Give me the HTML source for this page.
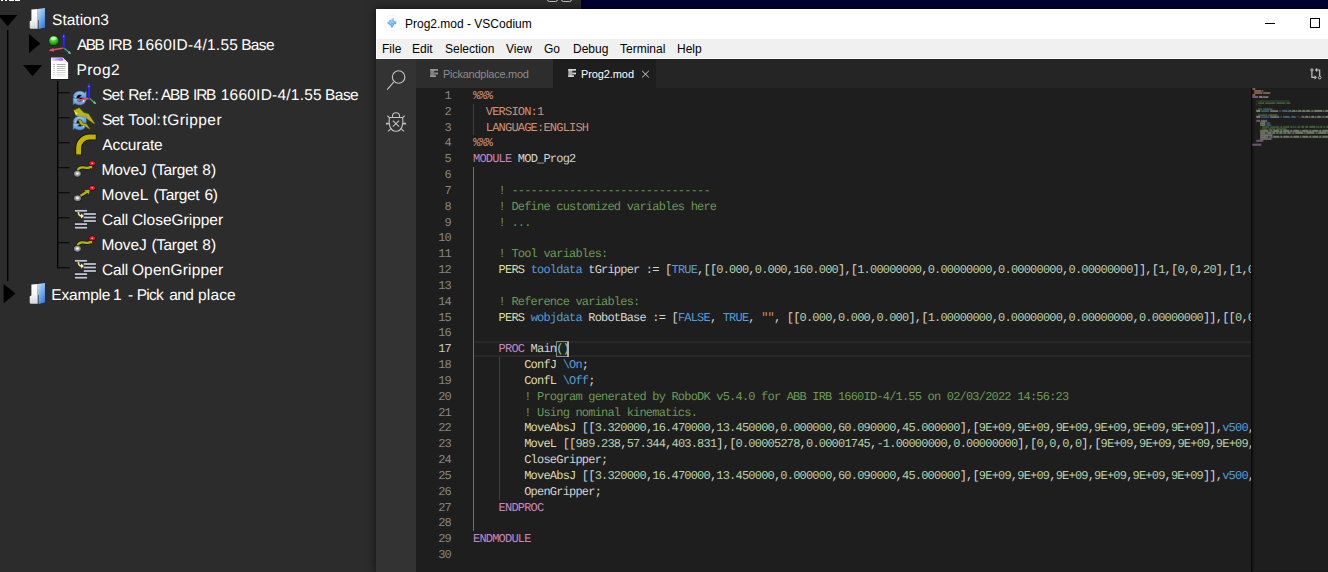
<!DOCTYPE html>
<html>
<head>
<meta charset="utf-8">
<title>Prog2.mod - VSCodium</title>
<style>
*{box-sizing:border-box;margin:0;padding:0}
html,body{width:1328px;height:572px;overflow:hidden;background:#2c2c2c;font-family:"Liberation Sans",sans-serif;}
#root{position:relative;width:1328px;height:572px;overflow:hidden;background:#2c2c2c;}
.abs{position:absolute}
/* ---------- left tree ---------- */
#tree{position:absolute;left:0;top:0;width:376px;height:572px;background:#2c2c2c;overflow:hidden}
.tt{position:absolute;height:25px;line-height:25px;color:#ffffff;font-size:15.5px;white-space:nowrap;text-rendering:geometricPrecision}
.tl{position:absolute;background:#000}
.ic{position:absolute;overflow:visible}
/* ---------- vscodium window ---------- */
#win{position:absolute;left:376px;top:9px;width:952px;height:563px;background:#1e1e1e;overflow:hidden;box-shadow:0 0 8px 1px rgba(0,0,0,0.5)}
#titlebar{position:absolute;left:0;top:0;width:952px;height:30px;background:#ffffff}
#titletext{position:absolute;left:29px;top:1px;height:30px;line-height:29px;font-size:12px;color:#000;white-space:nowrap}
#menubar{position:absolute;left:0;top:30px;width:952px;height:20px;background:#f0f0f0;border-left:1px solid #fff;border-bottom:1px solid #fff}
.mi{position:absolute;top:1px;margin-left:-1px;height:20px;line-height:19px;font-size:12px;color:#000;white-space:nowrap}
#activity{position:absolute;left:0;top:50px;width:40px;height:513px;background:#333333}
#tabbar{position:absolute;left:40px;top:50px;width:912px;height:29px;background:#252526}
.tab{position:absolute;top:0;height:29px;line-height:29px;font-size:11px;white-space:nowrap}
#editor{position:absolute;left:40px;top:79px;width:835px;height:484px;background:#1e1e1e;overflow:hidden}
#minimap{position:absolute;left:875px;top:79px;width:77px;height:484px;background:#1e1e1e;overflow:hidden;box-shadow:inset 3px 0 3px -2px #000}
.ln{position:absolute;left:0;width:35px;text-align:right;color:#858585;font-family:"Liberation Mono",monospace;font-size:12.0px;letter-spacing:-0.7992px;height:16px;line-height:16px;white-space:pre;text-rendering:geometricPrecision}
.cl{position:absolute;left:57px;color:#d4d4d4;font-family:"Liberation Mono",monospace;font-size:12.0px;letter-spacing:-0.7992px;height:16px;line-height:16px;white-space:pre;text-rendering:geometricPrecision}
.o{color:#ce9178}.p{color:#c586c0}.g{color:#6a9955}.y{color:#dcdcaa}.b{color:#569cd6}.n{color:#b5cea8}.w{color:#d4d4d4}
.guide{position:absolute;width:1px;background:#404040}
</style>
</head>
<body>
<div id="root">
<div class="abs" style="left:581px;top:0;width:747px;height:9px;background:#000030"></div>
<div class="abs" style="left:547px;top:-7px;width:11px;height:9px;border:1.2px solid #c4c0bc;border-radius:2.5px"></div>
<div class="abs" style="left:561px;top:-7px;width:11px;height:9px;border:1.2px solid #c4c0bc;border-radius:2.5px"></div>
<div id="tree">
<svg class="abs" style="left:0;top:0" width="376" height="572" viewBox="0 0 376 572">
<defs>
  <linearGradient id="gw" x1="0" y1="0" x2="0" y2="1"><stop offset="0" stop-color="#ffffff"/><stop offset="0.55" stop-color="#f4f4f4"/><stop offset="1" stop-color="#d6d6d6"/></linearGradient>
  <linearGradient id="gb" x1="0.2" y1="0" x2="0.8" y2="1"><stop offset="0" stop-color="#b9d9f2"/><stop offset="0.45" stop-color="#7fb2ea"/><stop offset="1" stop-color="#2f78de"/></linearGradient>
  <radialGradient id="gsph" cx="0.45" cy="0.3" r="0.75"><stop offset="0" stop-color="#c8f8c0"/><stop offset="0.32" stop-color="#4ad636"/><stop offset="0.72" stop-color="#15a00d"/><stop offset="1" stop-color="#063804"/></radialGradient>
  <linearGradient id="gpur" x1="0" y1="0" x2="1" y2="0"><stop offset="0" stop-color="#ead8ff"/><stop offset="1" stop-color="#8a55ff"/></linearGradient>
  <radialGradient id="ggray" cx="0.5" cy="0.45" r="0.6"><stop offset="0" stop-color="#ffffff"/><stop offset="0.22" stop-color="#e6e6e6"/><stop offset="0.5" stop-color="#9c9c9c"/><stop offset="0.85" stop-color="#6a6a6a"/><stop offset="1" stop-color="#2a2a2a"/></radialGradient>
  <radialGradient id="gred" cx="0.5" cy="0.45" r="0.6"><stop offset="0" stop-color="#ffffff"/><stop offset="0.3" stop-color="#e83040"/><stop offset="0.8" stop-color="#c40818"/><stop offset="1" stop-color="#7a0008"/></radialGradient>
  <linearGradient id="gref" x1="0" y1="0" x2="0" y2="1"><stop offset="0" stop-color="#9dc6ea"/><stop offset="1" stop-color="#5a94d2"/></linearGradient>

  <!-- station icon : origin = (29.7, cy-11) -->
  <g id="station">
    <path d="M1.7,1.5 L8,1 L8,20.8 L1.4,20.8 Q0,20.8 0,19.6 L0,13.7 Q0,12.7 1.7,12.4 Z" fill="url(#gw)"/>
    <path d="M8,1 L15.3,0 L15.3,19.4 L8.9,21.1 L8.9,12.3 L8,11.8 Z" fill="url(#gb)"/>
  </g>
  <!-- refresh arrows : origin = (72.9, cy-3) ; size 13.4 x 14 -->
  <g id="refresh">
    <ellipse cx="6.8" cy="7.1" rx="3.6" ry="3.2" fill="#0c0c0c"/>
    <path d="M0.4,6.6 C0.4,2.4 3.4,0.3 6.9,0.3 C8.9,0.3 10.4,0.9 11.6,1.9 L13.3,0.4 L13.3,7.2 L6.6,6.4 L8.9,4.3 C8.2,3.9 7.6,3.7 6.8,3.7 C5,3.7 3.8,4.9 3.6,6.6 Z" fill="url(#gref)" stroke="#3b74b4" stroke-width="0.5"/>
    <path d="M13.1,7.9 C13.1,11.8 10.2,13.9 6.7,13.9 C4.7,13.9 3.2,13.3 2,12.3 L0.3,13.8 L0.3,7 L7,7.8 L4.7,9.9 C5.4,10.3 6,10.5 6.8,10.5 C8.6,10.5 9.8,9.4 10,7.9 Z" fill="url(#gref)" stroke="#3b74b4" stroke-width="0.5"/>
    <rect x="1.6" y="5.6" width="1.8" height="0.9" fill="#ffffff"/>
    <rect x="10.2" y="9.2" width="0.9" height="1.8" fill="#e8f2ff"/>
  </g>
  <!-- axes: origin at axis origin point -->
  <g id="axes">
    <path d="M0,0 L6.3,5.3" stroke="#3fae7c" stroke-width="1.2" fill="none"/>
    <path d="M7.4,6.2 L3.9,4.9 L5.6,3 Z" fill="#5fd6a2"/>
    <path d="M0,0 L-13.5,2.2" stroke="#f04a5e" stroke-width="1.4" fill="none"/>
    <path d="M-15.2,2.4 L-10.4,-0.1 L-9.9,3.7 Z" fill="#f04a5e"/>
    <path d="M0,0.4 L0,-12" stroke="#2a22ff" stroke-width="2" fill="none"/>
    <path d="M0,-15.2 L1.9,-10.6 L-1.9,-10.6 Z" fill="#2a22ff"/>
    <rect x="-0.5" y="-12.4" width="0.9" height="1.6" fill="#9a9aff"/>
  </g>
  <g id="axes2">
    <path d="M0,0 L6.3,5.3" stroke="#3fae7c" stroke-width="1.2" fill="none"/>
    <path d="M7.4,6.2 L3.9,4.9 L5.6,3 Z" fill="#5fd6a2"/>
    <path d="M0,0.3 L-11.2,2.4" stroke="#f04a5e" stroke-width="1.7" fill="none" stroke-linecap="round"/>
    <rect x="-5.9" y="1.9" width="0.9" height="1.7" fill="#f6e6e6"/>
    <path d="M0,0.4 L0,-12" stroke="#2a22ff" stroke-width="2" fill="none"/>
    <path d="M0,-15.2 L1.9,-10.6 L-1.9,-10.6 Z" fill="#2a22ff"/>
    <rect x="-0.5" y="-12.4" width="0.9" height="1.6" fill="#9a9aff"/>
  </g>
  <!-- move J : origin row center (0,cy) -->
  <g id="movej">
    <path d="M77.6,2 C78.6,-2.8 83.5,-1.6 85.3,-1.3 C87.5,-0.9 89,-0.6 90.8,-2.4" stroke="#1a1a10" stroke-width="3.6" fill="none" stroke-linecap="round"/>
    <path d="M92.6,-4.2 L92.6,0.9 L88.6,-2.9 Z" fill="#b6b412" stroke="#1a1a10" stroke-width="0.8"/>
    <path d="M77.6,2 C78.6,-2.8 83.5,-1.6 85.3,-1.3 C87.5,-0.9 89,-0.6 90.8,-2.4" stroke="#b6b412" stroke-width="2.2" fill="none" stroke-linecap="round"/>
    <ellipse cx="77.4" cy="4.8" rx="4.1" ry="3.6" fill="#1c1c1c"/>
    <ellipse cx="77.4" cy="4.8" rx="3.6" ry="3.1" fill="url(#ggray)"/>
    <ellipse cx="92.2" cy="-5.6" rx="3.5" ry="2.7" fill="#240004"/>
    <ellipse cx="92.2" cy="-5.6" rx="3.1" ry="2.3" fill="url(#gred)"/>
  </g>
  <g id="movel">
    <path d="M80.2,1.9 L87,-2.3" stroke="#1a1a10" stroke-width="3.6" fill="none"/>
    <path d="M90.4,-5 L89.2,0.9 L83.4,-3.9 Z" fill="#b6b412" stroke="#1a1a10" stroke-width="0.8"/>
    <path d="M80.2,1.9 L87,-2.3" stroke="#b6b412" stroke-width="2.3" fill="none"/>
    <ellipse cx="77.5" cy="4.3" rx="4.1" ry="3.6" fill="#1c1c1c"/>
    <ellipse cx="77.5" cy="4.3" rx="3.6" ry="3.1" fill="url(#ggray)"/>
    <ellipse cx="92.2" cy="-5.9" rx="3.5" ry="2.7" fill="#240004"/>
    <ellipse cx="92.2" cy="-5.9" rx="3.1" ry="2.3" fill="url(#gred)"/>
  </g>
  <g id="call">
    <g fill="#1e1e22">
      <rect x="74.5" y="-10.4" width="13" height="2.7"/><rect x="83.3" y="-7.2" width="13" height="2.7"/><rect x="83.3" y="-3.7" width="13" height="2.7"/><rect x="83.3" y="-0.2" width="13" height="2.7"/><rect x="74.5" y="2.9" width="13" height="2.7"/><rect x="74.5" y="6.5" width="13" height="2.7"/>
    </g>
    <g fill="#bfc4d6">
      <rect x="74.9" y="-10" width="12.2" height="1.8"/><rect x="83.7" y="-6.8" width="12.2" height="1.8"/><rect x="83.7" y="-3.3" width="12.2" height="1.8"/><rect x="83.7" y="0.2" width="12.2" height="1.8"/><rect x="74.9" y="3.3" width="12.2" height="1.8"/><rect x="74.9" y="6.9" width="12.2" height="1.8"/>
    </g>
    <path d="M78.4,-8 C78.4,-5 79.6,-4 81.6,-3.9" stroke="#f4e08a" stroke-width="1.6" fill="none"/>
    <path d="M81,-6.3 L84,-3.8 L81,-1.5 Z" fill="#fff3c0"/>
  </g>
</defs>

<!-- tree lines -->
<rect x="7" y="30" width="1.4" height="251" fill="#000"/>
<rect x="57" y="81" width="1.3" height="187.3" fill="#000"/>
<g fill="#0a0a0a">
<rect x="57" y="92.1" width="12.7" height="1.2"/><rect x="57" y="117.1" width="12.7" height="1.2"/><rect x="57" y="142.1" width="12.7" height="1.2"/><rect x="57" y="167.1" width="12.7" height="1.2"/><rect x="57" y="192.1" width="12.7" height="1.2"/><rect x="57" y="217.1" width="12.7" height="1.2"/><rect x="57" y="242.1" width="12.7" height="1.2"/><rect x="57" y="267.1" width="12.7" height="1.2"/>
</g>
<!-- arrows -->
<path d="M-2,15 L17.2,15 L7.6,26.2 Z" fill="#000"/>
<path d="M29,34 L40.2,43.6 L29,53.2 Z" fill="#000"/>
<path d="M23,65 L42.2,65 L32.6,76.2 Z" fill="#000"/>
<path d="M3.6,284 L15.6,293.6 L3.6,303.2 Z" fill="#000"/>

<!-- station icons -->
<use href="#station" x="29.7" y="8"/>
<use href="#station" x="29.7" y="283"/>

<!-- ABB base icon -->
<circle cx="53.8" cy="40.8" r="5.3" fill="#0a2a08"/>
<circle cx="53.8" cy="40.8" r="4.8" fill="url(#gsph)"/>
<ellipse cx="53.6" cy="38.4" rx="3.1" ry="1.7" fill="#ffffff" opacity="0.55"/>
<use href="#axes" x="63.8" y="48"/>

<!-- doc icon -->
<path d="M50.3,57 L63,57 L68.8,62.6 L68.8,79.5 L50.3,79.5 Z" fill="#0c0c0c"/>
<path d="M50.9,57.5 L62.8,57.5 L68.2,62.8 L68.2,78.9 L50.9,78.9 Z" fill="#ffffff"/>
<path d="M62.8,57.5 L68.2,62.8 L63.6,62.4 Z" fill="#e4e4e4"/>
<rect x="51.3" y="58.2" width="11.6" height="2.5" fill="url(#gpur)"/>
<g>
<rect x="53.3" y="64" width="1.7" height="0.9" fill="#a0a0a0"/><rect x="56.7" y="64" width="8.8" height="0.9" fill="#a0a0a0"/>
<rect x="53.3" y="66" width="1.7" height="0.9" fill="#aaaaaa"/><rect x="56.7" y="66" width="8.8" height="0.9" fill="#aaaaaa"/>
<rect x="53.3" y="68" width="1.7" height="0.9" fill="#b6b6b6"/><rect x="56.7" y="68" width="8.8" height="0.9" fill="#b6b6b6"/>
<rect x="53.3" y="70" width="1.7" height="0.9" fill="#c2c2c2"/><rect x="56.7" y="70" width="8.8" height="0.9" fill="#c2c2c2"/>
<rect x="53.3" y="72" width="1.7" height="0.9" fill="#d0d0d0"/><rect x="56.7" y="72" width="8.8" height="0.9" fill="#d0d0d0"/>
<rect x="53.3" y="73.9" width="1.7" height="0.9" fill="#dadada"/><rect x="56.7" y="73.9" width="8.8" height="0.9" fill="#dadada"/>
<rect x="53.3" y="75.6" width="1.7" height="0.9" fill="#e2e2e2"/><rect x="56.7" y="75.6" width="8.8" height="0.9" fill="#e2e2e2"/>
</g>

<!-- Set Ref icon -->
<use href="#refresh" x="72.9" y="91"/>
<use href="#axes2" x="89" y="98"/>

<!-- Set Tool icon -->
<path d="M73.4,110.2 L79.2,107.6 L84,112.6 L88.6,113.4 L95,123.6 L94.2,124.2 L86.4,118.6 L80.6,117.8 L75.6,115.6 Z" fill="#b4b41e" stroke="#3a3a08" stroke-width="0.6"/>
<path d="M74,110.6 L76,115 L77.8,113.6 Z" fill="#e8e870"/>
<use href="#refresh" x="72.9" y="116"/>
<path d="M77.8,119.6 L81.2,120 L82.6,123 L86.6,123.8 L90,128.8 L89.2,129.2 L84.6,126 L80.6,125 Z" fill="#b4b41e" stroke="#3a3a08" stroke-width="0.5"/>

<!-- Accurate icon -->
<path d="M78.65,155 L78.65,148 A11,11 0 0 1 89.65,137.05 L96.2,137.05" stroke="#0a0a0a" stroke-width="6.6" fill="none"/>
<path d="M78.65,154.6 L78.65,148 A11,11 0 0 1 89.65,137.05 L95.8,137.05" stroke="#c0b400" stroke-width="5" fill="none"/>

<use href="#movej" x="0" y="169"/>
<use href="#movel" x="0" y="194"/>
<use href="#call" x="0" y="219.9"/>
<use href="#movej" x="0" y="244"/>
<use href="#call" x="0" y="269.9"/>
</svg>
<div class="tt" style="left:52.10px;top:7.5px;letter-spacing:-0.008px">Station3</div>
<div class="tt" style="left:77.10px;top:32.5px;letter-spacing:-1.638px">ABB</div>
<div class="tt" style="left:108.00px;top:32.5px;letter-spacing:-0.800px">IRB</div>
<div class="tt" style="left:136.50px;top:32.5px;letter-spacing:0.265px">1660ID-4/1.55</div>
<div class="tt" style="left:241.20px;top:32.5px;letter-spacing:-0.670px">Base</div>
<div class="tt" style="left:76.40px;top:57.5px;letter-spacing:0.465px">Prog2</div>
<div class="tt" style="left:102.00px;top:82.5px;letter-spacing:-0.779px">Set</div>
<div class="tt" style="left:128.20px;top:82.5px;letter-spacing:-0.557px">Ref.:</div>
<div class="tt" style="left:160.90px;top:82.5px;letter-spacing:-1.138px">ABB</div>
<div class="tt" style="left:193.10px;top:82.5px;letter-spacing:-1.250px">IRB</div>
<div class="tt" style="left:220.70px;top:82.5px;letter-spacing:0.232px">1660ID-4/1.55</div>
<div class="tt" style="left:325.00px;top:82.5px;letter-spacing:-0.536px">Base</div>
<div class="tt" style="left:102.00px;top:107.5px;letter-spacing:-0.779px">Set</div>
<div class="tt" style="left:128.20px;top:107.5px;letter-spacing:-0.034px">Tool:</div>
<div class="tt" style="left:162.40px;top:107.5px;letter-spacing:0.453px">tGripper</div>
<div class="tt" style="left:102.30px;top:132.5px;letter-spacing:-0.107px">Accurate</div>
<div class="tt" style="left:101.40px;top:157.5px;letter-spacing:-0.076px">MoveJ</div>
<div class="tt" style="left:151.40px;top:157.5px;letter-spacing:-0.356px">(Target</div>
<div class="tt" style="left:202.20px;top:157.5px;letter-spacing:0.280px">8)</div>
<div class="tt" style="left:101.40px;top:182.5px;letter-spacing:0.099px">MoveL</div>
<div class="tt" style="left:153.50px;top:182.5px;letter-spacing:-0.356px">(Target</div>
<div class="tt" style="left:204.60px;top:182.5px;letter-spacing:-0.420px">6)</div>
<div class="tt" style="left:102.10px;top:207.5px;letter-spacing:-0.219px">Call</div>
<div class="tt" style="left:131.90px;top:207.5px;letter-spacing:-0.005px">CloseGripper</div>
<div class="tt" style="left:101.40px;top:232.5px;letter-spacing:-0.076px">MoveJ</div>
<div class="tt" style="left:151.40px;top:232.5px;letter-spacing:-0.356px">(Target</div>
<div class="tt" style="left:202.20px;top:232.5px;letter-spacing:0.280px">8)</div>
<div class="tt" style="left:102.10px;top:257.5px;letter-spacing:-0.219px">Call</div>
<div class="tt" style="left:131.90px;top:257.5px;letter-spacing:0.166px">OpenGripper</div>
<div class="tt" style="left:51.30px;top:282.5px;letter-spacing:-0.197px">Example</div>
<div class="tt" style="left:113.00px;top:282.5px;letter-spacing:0.000px">1</div>
<div class="tt" style="left:128.00px;top:282.5px;letter-spacing:0.000px">-</div>
<div class="tt" style="left:136.70px;top:282.5px;letter-spacing:-0.744px">Pick</div>
<div class="tt" style="left:169.30px;top:282.5px;letter-spacing:-0.620px">and</div>
<div class="tt" style="left:198.10px;top:282.5px;letter-spacing:0.141px">place</div>
<div class="abs" style="left:1.4px;top:0;width:1.4px;height:1.1px;background:#fff"></div><div class="abs" style="left:4.8px;top:0;width:1.8px;height:1.1px;background:#fff"></div><div class="abs" style="left:9.4px;top:0;width:4.6px;height:1.2px;background:#fff"></div><div class="abs" style="left:15.4px;top:0;width:4.6px;height:1.2px;background:#fff"></div>
</div>
<div id="win">
  <div id="titlebar">
    <svg class="abs" style="left:6px;top:5px" width="20" height="20" viewBox="0 0 20 20">
      <defs><linearGradient id="gvs" x1="0" y1="0" x2="0.3" y2="1"><stop offset="0" stop-color="#a6d4fb"/><stop offset="1" stop-color="#3f90ec"/></linearGradient>
      <filter id="fbl" x="-20%" y="-20%" width="140%" height="140%"><feGaussianBlur stdDeviation="0.35"/></filter></defs>
      <circle cx="9.9" cy="8.8" r="7.7" fill="none" stroke="#e2e2e2" stroke-width="0.7" stroke-dasharray="1.6 1.2"/>
      <path filter="url(#fbl)" d="M11.2,3.8 L12.2,4.4 L11.6,6.6 L14.6,7.8 L14,10.2 L12.6,10 L10.2,13.8 L9.4,13.4 L8.2,11.2 L5.6,9.8 L5.2,8.2 L6.8,7.6 L7.2,5.8 L9.2,5.8 Z" fill="url(#gvs)" opacity="0.9"/>
      <path d="M9.4,6.8 L10.2,8.6 L11.6,8.4 M8,8 L9,9.8 M10.4,10 L9.8,11.8" stroke="#e8f4ff" stroke-width="0.6" fill="none" opacity="0.8"/>
    </svg>
    <div id="titletext">Prog2.mod - VSCodium</div>
    <div class="abs" style="left:889px;top:14px;width:10px;height:1px;background:#000"></div>
    <div class="abs" style="left:934px;top:9px;width:10px;height:10px;border:1px solid #000"></div>
  </div>
  <div id="menubar">
    <div class="mi" style="left:6px">File</div>
    <div class="mi" style="left:36px">Edit</div>
    <div class="mi" style="left:69px">Selection</div>
    <div class="mi" style="left:130px">View</div>
    <div class="mi" style="left:168px">Go</div>
    <div class="mi" style="left:197px">Debug</div>
    <div class="mi" style="left:244px">Terminal</div>
    <div class="mi" style="left:301px">Help</div>
  </div>
  <div id="activity">
    <svg class="abs" style="left:0;top:0" width="40" height="100" viewBox="0 0 40 100">
      <!-- search -->
      <circle cx="22.6" cy="18" r="6.25" fill="none" stroke="#c2c2c2" stroke-width="1.15"/>
      <path d="M17.9,22.9 L11.2,30.6" stroke="#c2c2c2" stroke-width="1.15" fill="none"/>
      <!-- bug -->
      <g stroke="#c2c2c2" stroke-width="1.1" fill="none" transform="translate(0,0.7)">
        <path d="M16.5,57.7 L16.5,56.5 A3.5,3.5 0 0 1 23.5,56.5 L23.5,57.7"/>
        <path d="M13.4,57.75 L26.6,57.75 C27.6,63.4 26.4,71.6 20,71.6 C13.6,71.6 12.4,63.4 13.4,57.75 Z"/>
        <path d="M16.8,60.9 L23.1,66.9 M23.1,60.9 L16.8,66.9"/>
        <path d="M13.8,58.4 L11.4,55.9 M26.2,58.4 L28.6,55.9 M15.3,68.7 L12,71.6 M24.7,68.7 L28,71.6"/>
        <path d="M9.9,63.9 L12.9,63.9 M27.1,63.9 L30.1,63.9" stroke-width="1.6"/>
      </g>
    </svg>
  </div>
  <div id="tabbar">
    <div class="tab" style="left:0;width:137px;background:#2d2d2d;color:#8c8c8c">
      <svg class="abs" style="left:14px;top:10px" width="9" height="9" viewBox="0 0 9 9"><g opacity="0.62"><rect x="0.3" y="0" width="4" height="8" fill="#b4b4b4"/><rect x="0.3" y="0" width="7.7" height="1.7" fill="#d8d8d8"/><rect x="4.3" y="3.6" width="3.7" height="1.8" fill="#d8d8d8"/><rect x="0.3" y="6.3" width="5.7" height="1.7" fill="#d8d8d8"/></g></svg>
      <span style="position:absolute;left:27px;top:1px;letter-spacing:-0.26px">Pickandplace.mod</span></div>
    <div class="tab" style="left:137px;width:103px;background:#1e1e1e;color:#ffffff">
      <svg class="abs" style="left:14.6px;top:10px" width="9" height="9" viewBox="0 0 9 9"><rect x="0.3" y="0" width="4" height="8" fill="#a8a8a8"/><rect x="0.3" y="0" width="7.7" height="1.7" fill="#d4d4d4"/><rect x="4.3" y="3.6" width="3.7" height="1.8" fill="#d4d4d4"/><rect x="0.3" y="6.3" width="5.7" height="1.7" fill="#d4d4d4"/></svg>
      <span style="position:absolute;left:28px;top:1px;letter-spacing:-0.1px">Prog2.mod</span>
      <svg class="abs" style="left:87.5px;top:10.5px" width="9" height="9" viewBox="0 0 9 9"><path d="M1.2,0.9 L7.8,7.4 M7.8,0.9 L1.2,7.4" stroke="#cfcfcf" stroke-width="1" fill="none"/></svg>
    </div>
    <svg class="abs" style="left:890px;top:6px" width="20" height="18" viewBox="0 0 20 18">
      <g stroke="#c4c4c4" stroke-width="1.2" fill="none">
        <path d="M5.9,5.4 L5.9,12.4 L9.4,12.4"/>
        <path d="M13.7,11 L13.7,5 L10.4,5"/>
        <circle cx="13.7" cy="12.6" r="1.3" stroke-width="1"/>
      </g>
      <circle cx="5.9" cy="4.9" r="1.7" fill="#9a9a9a"/>
      <path d="M8.6,10.2 L10.9,12.4 L8.6,14.6 Z" fill="#c4c4c4"/>
      <path d="M11.2,2.8 L8.9,5 L11.2,7.2 Z" fill="#c4c4c4"/>
    </svg>
  </div>

  <div id="editor">
<div class="abs" style="left:57px;top:253.23px;width:778px;height:15.83px;border-top:2px solid #282828;border-bottom:2px solid #282828"></div>
<div class="guide" style="left:57.0px;top:15.73px;height:31.67px;background:#404040"></div>
<div class="guide" style="left:57.0px;top:79.07px;height:364.16px;background:#707070"></div>
<div class="guide" style="left:82.6px;top:269.06px;height:142.50px;background:#404040"></div>
<div class="ln" style="top:-0.10px;color:#858585">1</div>
<div class="cl" style="top:-0.10px"><span class="o">%%%</span></div>
<div class="ln" style="top:15.73px;color:#858585">2</div>
<div class="cl" style="top:15.73px"><span class="o">  VERSION:1</span></div>
<div class="ln" style="top:31.57px;color:#858585">3</div>
<div class="cl" style="top:31.57px"><span class="o">  LANGUAGE:ENGLISH</span></div>
<div class="ln" style="top:47.40px;color:#858585">4</div>
<div class="cl" style="top:47.40px"><span class="o">%%%</span></div>
<div class="ln" style="top:63.23px;color:#858585">5</div>
<div class="cl" style="top:63.23px"><span class="p">MODULE</span> MOD_Prog2</div>
<div class="ln" style="top:79.07px;color:#858585">6</div>
<div class="ln" style="top:94.90px;color:#858585">7</div>
<div class="cl" style="top:94.90px"><span class="g">    ! -------------------------------</span></div>
<div class="ln" style="top:110.73px;color:#858585">8</div>
<div class="cl" style="top:110.73px"><span class="g">    ! Define customized variables here</span></div>
<div class="ln" style="top:126.56px;color:#858585">9</div>
<div class="cl" style="top:126.56px"><span class="g">    ! ...</span></div>
<div class="ln" style="top:142.40px;color:#858585">10</div>
<div class="ln" style="top:158.23px;color:#858585">11</div>
<div class="cl" style="top:158.23px"><span class="g">    ! Tool variables:</span></div>
<div class="ln" style="top:174.06px;color:#858585">12</div>
<div class="cl" style="top:174.06px">    <span class="y">PERS</span> <span class="b">tooldata</span> tGripper := [<span class="b">TRUE</span>,[[<span class="n">0.000</span>,<span class="n">0.000</span>,<span class="n">160.000</span>],[<span class="n">1.00000000</span>,<span class="n">0.00000000</span>,<span class="n">0.00000000</span>,<span class="n">0.00000000</span>]],[<span class="n">1</span>,[<span class="n">0</span>,<span class="n">0</span>,<span class="n">20</span>],[<span class="n">1</span>,<span class="n">0</span>,<span class="n">0</span>,<span class="n">0</span>],<span class="n">0</span>,<span class="n">0</span>,<span class="n">0</span>]];</div>
<div class="ln" style="top:189.90px;color:#858585">13</div>
<div class="ln" style="top:205.73px;color:#858585">14</div>
<div class="cl" style="top:205.73px"><span class="g">    ! Reference variables:</span></div>
<div class="ln" style="top:221.56px;color:#858585">15</div>
<div class="cl" style="top:221.56px">    <span class="y">PERS</span> <span class="b">wobjdata</span> RobotBase := [<span class="b">FALSE</span>, <span class="b">TRUE</span>, <span class="o">&quot;&quot;</span>, [[<span class="n">0.000</span>,<span class="n">0.000</span>,<span class="n">0.000</span>],[<span class="n">1.00000000</span>,<span class="n">0.00000000</span>,<span class="n">0.00000000</span>,<span class="n">0.00000000</span>]],[[<span class="n">0</span>,<span class="n">0</span>,<span class="n">0</span>],[<span class="n">1</span>,<span class="n">0</span>,<span class="n">0</span>,<span class="n">0</span>]]];</div>
<div class="ln" style="top:237.40px;color:#858585">16</div>
<div class="ln" style="top:253.23px;color:#c6c6c6">17</div>
<div class="cl" style="top:253.23px">    <span class="p">PROC</span> Main()</div>
<div class="ln" style="top:269.06px;color:#858585">18</div>
<div class="cl" style="top:269.06px">        <span class="y">ConfJ</span> <span class="b">\On</span>;</div>
<div class="ln" style="top:284.89px;color:#858585">19</div>
<div class="cl" style="top:284.89px">        <span class="y">ConfL</span> <span class="b">\Off</span>;</div>
<div class="ln" style="top:300.73px;color:#858585">20</div>
<div class="cl" style="top:300.73px"><span class="g">        ! Program generated by RoboDK v5.4.0 for ABB IRB 1660ID-4/1.55 on 02/03/2022 14:56:23</span></div>
<div class="ln" style="top:316.56px;color:#858585">21</div>
<div class="cl" style="top:316.56px"><span class="g">        ! Using nominal kinematics.</span></div>
<div class="ln" style="top:332.39px;color:#858585">22</div>
<div class="cl" style="top:332.39px">        <span class="y">MoveAbsJ</span> [[<span class="n">3.320000</span>,<span class="n">16.470000</span>,<span class="n">13.450000</span>,<span class="n">0.000000</span>,<span class="n">60.090000</span>,<span class="n">45.000000</span>],[<span class="n">9E+09</span>,<span class="n">9E+09</span>,<span class="n">9E+09</span>,<span class="n">9E+09</span>,<span class="n">9E+09</span>,<span class="n">9E+09</span>]],<span class="b">v500</span>,<span class="b">z1</span>,tGripper<span class="b">\WObj</span>:=RobotBase;</div>
<div class="ln" style="top:348.23px;color:#858585">23</div>
<div class="cl" style="top:348.23px">        <span class="y">MoveL</span> [[<span class="n">989.238</span>,<span class="n">57.344</span>,<span class="n">403.831</span>],[<span class="n">0.00005278</span>,<span class="n">0.00001745</span>,<span class="n">-1.00000000</span>,<span class="n">0.00000000</span>],[<span class="n">0</span>,<span class="n">0</span>,<span class="n">0</span>,<span class="n">0</span>],[<span class="n">9E+09</span>,<span class="n">9E+09</span>,<span class="n">9E+09</span>,<span class="n">9E+09</span>,<span class="n">9E+09</span>,<span class="n">9E+09</span>]],<span class="b">v500</span>,<span class="b">z1</span>,tGripper<span class="b">\WObj</span>:=RobotBase;</div>
<div class="ln" style="top:364.06px;color:#858585">24</div>
<div class="cl" style="top:364.06px">        CloseGripper;</div>
<div class="ln" style="top:379.89px;color:#858585">25</div>
<div class="cl" style="top:379.89px">        <span class="y">MoveAbsJ</span> [[<span class="n">3.320000</span>,<span class="n">16.470000</span>,<span class="n">13.450000</span>,<span class="n">0.000000</span>,<span class="n">60.090000</span>,<span class="n">45.000000</span>],[<span class="n">9E+09</span>,<span class="n">9E+09</span>,<span class="n">9E+09</span>,<span class="n">9E+09</span>,<span class="n">9E+09</span>,<span class="n">9E+09</span>]],<span class="b">v500</span>,<span class="b">z1</span>,tGripper<span class="b">\WObj</span>:=RobotBase;</div>
<div class="ln" style="top:395.72px;color:#858585">26</div>
<div class="cl" style="top:395.72px">        OpenGripper;</div>
<div class="ln" style="top:411.56px;color:#858585">27</div>
<div class="cl" style="top:411.56px">    <span class="p">ENDPROC</span></div>
<div class="ln" style="top:427.39px;color:#858585">28</div>
<div class="ln" style="top:443.22px;color:#858585">29</div>
<div class="cl" style="top:443.22px"><span class="p">ENDMODULE</span></div>
<div class="ln" style="top:459.06px;color:#858585">30</div>
<div class="abs" style="left:139.83px;top:253.43px;width:13.00px;height:15.63px;border:1px solid #888888;background:rgba(0,100,0,0.12)"></div>
<div class="abs" style="left:151.43px;top:253.63px;width:1.3px;height:15.23px;background:#aeafad"></div>
  </div>
  <div id="minimap">
<svg class="abs" style="left:0;top:0" width="77" height="484" viewBox="0 0 77 484">
<rect x="1.30" y="0.00" width="3.00" height="1" fill="#ce9178" opacity="0.56"/>
<rect x="1.30" y="1.00" width="3.00" height="1" fill="#ce9178" opacity="0.56"/>
<rect x="3.30" y="1.99" width="7.00" height="1" fill="#ce9178" opacity="0.56"/>
<rect x="10.30" y="1.99" width="1.00" height="1" fill="#ce9178" opacity="0.20"/>
<rect x="11.30" y="1.99" width="1.00" height="1" fill="#ce9178" opacity="0.56"/>
<rect x="3.30" y="2.99" width="7.00" height="1" fill="#ce9178" opacity="0.56"/>
<rect x="10.30" y="2.99" width="1.00" height="1" fill="#ce9178" opacity="0.20"/>
<rect x="11.30" y="2.99" width="1.00" height="1" fill="#ce9178" opacity="0.56"/>
<rect x="3.30" y="3.98" width="8.00" height="1" fill="#ce9178" opacity="0.56"/>
<rect x="11.30" y="3.98" width="1.00" height="1" fill="#ce9178" opacity="0.20"/>
<rect x="12.30" y="3.98" width="7.00" height="1" fill="#ce9178" opacity="0.56"/>
<rect x="3.30" y="4.98" width="8.00" height="1" fill="#ce9178" opacity="0.56"/>
<rect x="11.30" y="4.98" width="1.00" height="1" fill="#ce9178" opacity="0.20"/>
<rect x="12.30" y="4.98" width="7.00" height="1" fill="#ce9178" opacity="0.56"/>
<rect x="1.30" y="5.97" width="3.00" height="1" fill="#ce9178" opacity="0.56"/>
<rect x="1.30" y="6.97" width="3.00" height="1" fill="#ce9178" opacity="0.56"/>
<rect x="1.30" y="7.96" width="6.00" height="1" fill="#c586c0" opacity="0.56"/>
<rect x="8.30" y="7.96" width="3.00" height="1" fill="#d4d4d4" opacity="0.56"/>
<rect x="12.30" y="7.96" width="1.00" height="1" fill="#d4d4d4" opacity="0.56"/>
<rect x="13.30" y="7.96" width="3.00" height="1" fill="#d4d4d4" opacity="0.36"/>
<rect x="16.30" y="7.96" width="1.00" height="1" fill="#d4d4d4" opacity="0.56"/>
<rect x="1.30" y="8.96" width="6.00" height="1" fill="#c586c0" opacity="0.56"/>
<rect x="8.30" y="8.96" width="3.00" height="1" fill="#d4d4d4" opacity="0.56"/>
<rect x="11.30" y="8.96" width="1.00" height="1" fill="#d4d4d4" opacity="0.32"/>
<rect x="12.30" y="8.96" width="1.00" height="1" fill="#d4d4d4" opacity="0.56"/>
<rect x="13.30" y="8.96" width="3.00" height="1" fill="#d4d4d4" opacity="0.52"/>
<rect x="16.30" y="8.96" width="1.00" height="1" fill="#d4d4d4" opacity="0.56"/>
<rect x="5.30" y="11.94" width="1.00" height="1" fill="#6a9955" opacity="0.20"/>
<rect x="7.30" y="11.94" width="31.00" height="1" fill="#6a9955" opacity="0.20"/>
<rect x="5.30" y="12.94" width="1.00" height="1" fill="#6a9955" opacity="0.20"/>
<rect x="7.30" y="12.94" width="31.00" height="1" fill="#6a9955" opacity="0.20"/>
<rect x="5.30" y="13.93" width="1.00" height="1" fill="#6a9955" opacity="0.20"/>
<rect x="7.30" y="13.93" width="1.00" height="1" fill="#6a9955" opacity="0.56"/>
<rect x="8.30" y="13.93" width="5.00" height="1" fill="#6a9955" opacity="0.36"/>
<rect x="14.30" y="13.93" width="10.00" height="1" fill="#6a9955" opacity="0.36"/>
<rect x="25.30" y="13.93" width="9.00" height="1" fill="#6a9955" opacity="0.36"/>
<rect x="35.30" y="13.93" width="4.00" height="1" fill="#6a9955" opacity="0.36"/>
<rect x="5.30" y="14.93" width="1.00" height="1" fill="#6a9955" opacity="0.20"/>
<rect x="7.30" y="14.93" width="1.00" height="1" fill="#6a9955" opacity="0.56"/>
<rect x="8.30" y="14.93" width="5.00" height="1" fill="#6a9955" opacity="0.52"/>
<rect x="14.30" y="14.93" width="10.00" height="1" fill="#6a9955" opacity="0.52"/>
<rect x="25.30" y="14.93" width="9.00" height="1" fill="#6a9955" opacity="0.52"/>
<rect x="35.30" y="14.93" width="4.00" height="1" fill="#6a9955" opacity="0.52"/>
<rect x="5.30" y="15.92" width="1.00" height="1" fill="#6a9955" opacity="0.20"/>
<rect x="5.30" y="16.92" width="1.00" height="1" fill="#6a9955" opacity="0.20"/>
<rect x="7.30" y="16.92" width="3.00" height="1" fill="#6a9955" opacity="0.32"/>
<rect x="5.30" y="19.90" width="1.00" height="1" fill="#6a9955" opacity="0.20"/>
<rect x="7.30" y="19.90" width="1.00" height="1" fill="#6a9955" opacity="0.56"/>
<rect x="8.30" y="19.90" width="3.00" height="1" fill="#6a9955" opacity="0.36"/>
<rect x="12.30" y="19.90" width="9.00" height="1" fill="#6a9955" opacity="0.36"/>
<rect x="21.30" y="19.90" width="1.00" height="1" fill="#6a9955" opacity="0.20"/>
<rect x="5.30" y="20.90" width="1.00" height="1" fill="#6a9955" opacity="0.20"/>
<rect x="7.30" y="20.90" width="1.00" height="1" fill="#6a9955" opacity="0.56"/>
<rect x="8.30" y="20.90" width="3.00" height="1" fill="#6a9955" opacity="0.52"/>
<rect x="12.30" y="20.90" width="9.00" height="1" fill="#6a9955" opacity="0.52"/>
<rect x="21.30" y="20.90" width="1.00" height="1" fill="#6a9955" opacity="0.20"/>
<rect x="5.30" y="21.89" width="4.00" height="1" fill="#dcdcaa" opacity="0.56"/>
<rect x="10.30" y="21.89" width="8.00" height="1" fill="#569cd6" opacity="0.36"/>
<rect x="19.30" y="21.89" width="1.00" height="1" fill="#d4d4d4" opacity="0.36"/>
<rect x="20.30" y="21.89" width="1.00" height="1" fill="#d4d4d4" opacity="0.56"/>
<rect x="21.30" y="21.89" width="6.00" height="1" fill="#d4d4d4" opacity="0.36"/>
<rect x="28.30" y="21.89" width="2.00" height="1" fill="#d4d4d4" opacity="0.20"/>
<rect x="31.30" y="21.89" width="1.00" height="1" fill="#d4d4d4" opacity="0.38"/>
<rect x="32.30" y="21.89" width="4.00" height="1" fill="#569cd6" opacity="0.56"/>
<rect x="37.30" y="21.89" width="2.00" height="1" fill="#d4d4d4" opacity="0.38"/>
<rect x="39.30" y="21.89" width="1.00" height="1" fill="#b5cea8" opacity="0.56"/>
<rect x="41.30" y="21.89" width="3.00" height="1" fill="#b5cea8" opacity="0.56"/>
<rect x="45.30" y="21.89" width="1.00" height="1" fill="#b5cea8" opacity="0.56"/>
<rect x="47.30" y="21.89" width="3.00" height="1" fill="#b5cea8" opacity="0.56"/>
<rect x="51.30" y="21.89" width="3.00" height="1" fill="#b5cea8" opacity="0.56"/>
<rect x="55.30" y="21.89" width="3.00" height="1" fill="#b5cea8" opacity="0.56"/>
<rect x="58.30" y="21.89" width="1.00" height="1" fill="#d4d4d4" opacity="0.38"/>
<rect x="60.30" y="21.89" width="1.00" height="1" fill="#d4d4d4" opacity="0.38"/>
<rect x="61.30" y="21.89" width="1.00" height="1" fill="#b5cea8" opacity="0.56"/>
<rect x="63.30" y="21.89" width="8.00" height="1" fill="#b5cea8" opacity="0.56"/>
<rect x="72.30" y="21.89" width="1.00" height="1" fill="#b5cea8" opacity="0.56"/>
<rect x="74.30" y="21.89" width="7.00" height="1" fill="#b5cea8" opacity="0.56"/>
<rect x="5.30" y="22.89" width="4.00" height="1" fill="#dcdcaa" opacity="0.56"/>
<rect x="10.30" y="22.89" width="8.00" height="1" fill="#569cd6" opacity="0.52"/>
<rect x="19.30" y="22.89" width="1.00" height="1" fill="#d4d4d4" opacity="0.52"/>
<rect x="20.30" y="22.89" width="1.00" height="1" fill="#d4d4d4" opacity="0.56"/>
<rect x="21.30" y="22.89" width="6.00" height="1" fill="#d4d4d4" opacity="0.52"/>
<rect x="28.30" y="22.89" width="2.00" height="1" fill="#d4d4d4" opacity="0.20"/>
<rect x="31.30" y="22.89" width="1.00" height="1" fill="#d4d4d4" opacity="0.38"/>
<rect x="32.30" y="22.89" width="4.00" height="1" fill="#569cd6" opacity="0.56"/>
<rect x="36.30" y="22.89" width="1.00" height="1" fill="#d4d4d4" opacity="0.32"/>
<rect x="37.30" y="22.89" width="2.00" height="1" fill="#d4d4d4" opacity="0.38"/>
<rect x="39.30" y="22.89" width="1.00" height="1" fill="#b5cea8" opacity="0.56"/>
<rect x="40.30" y="22.89" width="1.00" height="1" fill="#b5cea8" opacity="0.32"/>
<rect x="41.30" y="22.89" width="3.00" height="1" fill="#b5cea8" opacity="0.56"/>
<rect x="44.30" y="22.89" width="1.00" height="1" fill="#d4d4d4" opacity="0.32"/>
<rect x="45.30" y="22.89" width="1.00" height="1" fill="#b5cea8" opacity="0.56"/>
<rect x="46.30" y="22.89" width="1.00" height="1" fill="#b5cea8" opacity="0.32"/>
<rect x="47.30" y="22.89" width="3.00" height="1" fill="#b5cea8" opacity="0.56"/>
<rect x="50.30" y="22.89" width="1.00" height="1" fill="#d4d4d4" opacity="0.32"/>
<rect x="51.30" y="22.89" width="3.00" height="1" fill="#b5cea8" opacity="0.56"/>
<rect x="54.30" y="22.89" width="1.00" height="1" fill="#b5cea8" opacity="0.32"/>
<rect x="55.30" y="22.89" width="3.00" height="1" fill="#b5cea8" opacity="0.56"/>
<rect x="58.30" y="22.89" width="1.00" height="1" fill="#d4d4d4" opacity="0.38"/>
<rect x="59.30" y="22.89" width="1.00" height="1" fill="#d4d4d4" opacity="0.32"/>
<rect x="60.30" y="22.89" width="1.00" height="1" fill="#d4d4d4" opacity="0.38"/>
<rect x="61.30" y="22.89" width="1.00" height="1" fill="#b5cea8" opacity="0.56"/>
<rect x="62.30" y="22.89" width="1.00" height="1" fill="#b5cea8" opacity="0.32"/>
<rect x="63.30" y="22.89" width="8.00" height="1" fill="#b5cea8" opacity="0.56"/>
<rect x="71.30" y="22.89" width="1.00" height="1" fill="#d4d4d4" opacity="0.32"/>
<rect x="72.30" y="22.89" width="1.00" height="1" fill="#b5cea8" opacity="0.56"/>
<rect x="73.30" y="22.89" width="1.00" height="1" fill="#b5cea8" opacity="0.32"/>
<rect x="74.30" y="22.89" width="7.00" height="1" fill="#b5cea8" opacity="0.56"/>
<rect x="5.30" y="25.87" width="1.00" height="1" fill="#6a9955" opacity="0.20"/>
<rect x="7.30" y="25.87" width="1.00" height="1" fill="#6a9955" opacity="0.56"/>
<rect x="8.30" y="25.87" width="8.00" height="1" fill="#6a9955" opacity="0.36"/>
<rect x="17.30" y="25.87" width="9.00" height="1" fill="#6a9955" opacity="0.36"/>
<rect x="26.30" y="25.87" width="1.00" height="1" fill="#6a9955" opacity="0.20"/>
<rect x="5.30" y="26.87" width="1.00" height="1" fill="#6a9955" opacity="0.20"/>
<rect x="7.30" y="26.87" width="1.00" height="1" fill="#6a9955" opacity="0.56"/>
<rect x="8.30" y="26.87" width="8.00" height="1" fill="#6a9955" opacity="0.52"/>
<rect x="17.30" y="26.87" width="9.00" height="1" fill="#6a9955" opacity="0.52"/>
<rect x="26.30" y="26.87" width="1.00" height="1" fill="#6a9955" opacity="0.20"/>
<rect x="5.30" y="27.86" width="4.00" height="1" fill="#dcdcaa" opacity="0.56"/>
<rect x="10.30" y="27.86" width="8.00" height="1" fill="#569cd6" opacity="0.36"/>
<rect x="19.30" y="27.86" width="1.00" height="1" fill="#d4d4d4" opacity="0.56"/>
<rect x="20.30" y="27.86" width="4.00" height="1" fill="#d4d4d4" opacity="0.36"/>
<rect x="24.30" y="27.86" width="1.00" height="1" fill="#d4d4d4" opacity="0.56"/>
<rect x="25.30" y="27.86" width="3.00" height="1" fill="#d4d4d4" opacity="0.36"/>
<rect x="29.30" y="27.86" width="2.00" height="1" fill="#d4d4d4" opacity="0.20"/>
<rect x="32.30" y="27.86" width="1.00" height="1" fill="#d4d4d4" opacity="0.38"/>
<rect x="33.30" y="27.86" width="5.00" height="1" fill="#569cd6" opacity="0.56"/>
<rect x="40.30" y="27.86" width="4.00" height="1" fill="#569cd6" opacity="0.56"/>
<rect x="46.30" y="27.86" width="2.00" height="1" fill="#ce9178" opacity="0.30"/>
<rect x="50.30" y="27.86" width="2.00" height="1" fill="#d4d4d4" opacity="0.38"/>
<rect x="52.30" y="27.86" width="1.00" height="1" fill="#b5cea8" opacity="0.56"/>
<rect x="54.30" y="27.86" width="3.00" height="1" fill="#b5cea8" opacity="0.56"/>
<rect x="58.30" y="27.86" width="1.00" height="1" fill="#b5cea8" opacity="0.56"/>
<rect x="60.30" y="27.86" width="3.00" height="1" fill="#b5cea8" opacity="0.56"/>
<rect x="64.30" y="27.86" width="1.00" height="1" fill="#b5cea8" opacity="0.56"/>
<rect x="66.30" y="27.86" width="3.00" height="1" fill="#b5cea8" opacity="0.56"/>
<rect x="69.30" y="27.86" width="1.00" height="1" fill="#d4d4d4" opacity="0.38"/>
<rect x="71.30" y="27.86" width="1.00" height="1" fill="#d4d4d4" opacity="0.38"/>
<rect x="72.30" y="27.86" width="1.00" height="1" fill="#b5cea8" opacity="0.56"/>
<rect x="74.30" y="27.86" width="7.00" height="1" fill="#b5cea8" opacity="0.56"/>
<rect x="5.30" y="28.86" width="4.00" height="1" fill="#dcdcaa" opacity="0.56"/>
<rect x="10.30" y="28.86" width="8.00" height="1" fill="#569cd6" opacity="0.52"/>
<rect x="19.30" y="28.86" width="1.00" height="1" fill="#d4d4d4" opacity="0.56"/>
<rect x="20.30" y="28.86" width="4.00" height="1" fill="#d4d4d4" opacity="0.52"/>
<rect x="24.30" y="28.86" width="1.00" height="1" fill="#d4d4d4" opacity="0.56"/>
<rect x="25.30" y="28.86" width="3.00" height="1" fill="#d4d4d4" opacity="0.52"/>
<rect x="29.30" y="28.86" width="2.00" height="1" fill="#d4d4d4" opacity="0.20"/>
<rect x="32.30" y="28.86" width="1.00" height="1" fill="#d4d4d4" opacity="0.38"/>
<rect x="33.30" y="28.86" width="5.00" height="1" fill="#569cd6" opacity="0.56"/>
<rect x="38.30" y="28.86" width="1.00" height="1" fill="#d4d4d4" opacity="0.32"/>
<rect x="40.30" y="28.86" width="4.00" height="1" fill="#569cd6" opacity="0.56"/>
<rect x="44.30" y="28.86" width="1.00" height="1" fill="#d4d4d4" opacity="0.32"/>
<rect x="48.30" y="28.86" width="1.00" height="1" fill="#d4d4d4" opacity="0.32"/>
<rect x="50.30" y="28.86" width="2.00" height="1" fill="#d4d4d4" opacity="0.38"/>
<rect x="52.30" y="28.86" width="1.00" height="1" fill="#b5cea8" opacity="0.56"/>
<rect x="53.30" y="28.86" width="1.00" height="1" fill="#b5cea8" opacity="0.32"/>
<rect x="54.30" y="28.86" width="3.00" height="1" fill="#b5cea8" opacity="0.56"/>
<rect x="57.30" y="28.86" width="1.00" height="1" fill="#d4d4d4" opacity="0.32"/>
<rect x="58.30" y="28.86" width="1.00" height="1" fill="#b5cea8" opacity="0.56"/>
<rect x="59.30" y="28.86" width="1.00" height="1" fill="#b5cea8" opacity="0.32"/>
<rect x="60.30" y="28.86" width="3.00" height="1" fill="#b5cea8" opacity="0.56"/>
<rect x="63.30" y="28.86" width="1.00" height="1" fill="#d4d4d4" opacity="0.32"/>
<rect x="64.30" y="28.86" width="1.00" height="1" fill="#b5cea8" opacity="0.56"/>
<rect x="65.30" y="28.86" width="1.00" height="1" fill="#b5cea8" opacity="0.32"/>
<rect x="66.30" y="28.86" width="3.00" height="1" fill="#b5cea8" opacity="0.56"/>
<rect x="69.30" y="28.86" width="1.00" height="1" fill="#d4d4d4" opacity="0.38"/>
<rect x="70.30" y="28.86" width="1.00" height="1" fill="#d4d4d4" opacity="0.32"/>
<rect x="71.30" y="28.86" width="1.00" height="1" fill="#d4d4d4" opacity="0.38"/>
<rect x="72.30" y="28.86" width="1.00" height="1" fill="#b5cea8" opacity="0.56"/>
<rect x="73.30" y="28.86" width="1.00" height="1" fill="#b5cea8" opacity="0.32"/>
<rect x="74.30" y="28.86" width="7.00" height="1" fill="#b5cea8" opacity="0.56"/>
<rect x="5.30" y="31.84" width="4.00" height="1" fill="#c586c0" opacity="0.56"/>
<rect x="10.30" y="31.84" width="1.00" height="1" fill="#d4d4d4" opacity="0.56"/>
<rect x="11.30" y="31.84" width="3.00" height="1" fill="#d4d4d4" opacity="0.36"/>
<rect x="14.30" y="31.84" width="2.00" height="1" fill="#d4d4d4" opacity="0.38"/>
<rect x="5.30" y="32.84" width="4.00" height="1" fill="#c586c0" opacity="0.56"/>
<rect x="10.30" y="32.84" width="1.00" height="1" fill="#d4d4d4" opacity="0.56"/>
<rect x="11.30" y="32.84" width="3.00" height="1" fill="#d4d4d4" opacity="0.52"/>
<rect x="14.30" y="32.84" width="2.00" height="1" fill="#d4d4d4" opacity="0.38"/>
<rect x="9.30" y="33.83" width="1.00" height="1" fill="#dcdcaa" opacity="0.56"/>
<rect x="10.30" y="33.83" width="3.00" height="1" fill="#dcdcaa" opacity="0.36"/>
<rect x="13.30" y="33.83" width="1.00" height="1" fill="#dcdcaa" opacity="0.56"/>
<rect x="15.30" y="33.83" width="1.00" height="1" fill="#569cd6" opacity="0.38"/>
<rect x="16.30" y="33.83" width="1.00" height="1" fill="#569cd6" opacity="0.56"/>
<rect x="17.30" y="33.83" width="1.00" height="1" fill="#569cd6" opacity="0.36"/>
<rect x="18.30" y="33.83" width="1.00" height="1" fill="#d4d4d4" opacity="0.20"/>
<rect x="9.30" y="34.83" width="1.00" height="1" fill="#dcdcaa" opacity="0.56"/>
<rect x="10.30" y="34.83" width="3.00" height="1" fill="#dcdcaa" opacity="0.52"/>
<rect x="13.30" y="34.83" width="1.00" height="1" fill="#dcdcaa" opacity="0.56"/>
<rect x="15.30" y="34.83" width="1.00" height="1" fill="#569cd6" opacity="0.38"/>
<rect x="16.30" y="34.83" width="1.00" height="1" fill="#569cd6" opacity="0.56"/>
<rect x="17.30" y="34.83" width="1.00" height="1" fill="#569cd6" opacity="0.52"/>
<rect x="18.30" y="34.83" width="1.00" height="1" fill="#d4d4d4" opacity="0.20"/>
<rect x="9.30" y="35.82" width="1.00" height="1" fill="#dcdcaa" opacity="0.56"/>
<rect x="10.30" y="35.82" width="3.00" height="1" fill="#dcdcaa" opacity="0.36"/>
<rect x="13.30" y="35.82" width="1.00" height="1" fill="#dcdcaa" opacity="0.56"/>
<rect x="15.30" y="35.82" width="1.00" height="1" fill="#569cd6" opacity="0.38"/>
<rect x="16.30" y="35.82" width="1.00" height="1" fill="#569cd6" opacity="0.56"/>
<rect x="17.30" y="35.82" width="2.00" height="1" fill="#569cd6" opacity="0.36"/>
<rect x="19.30" y="35.82" width="1.00" height="1" fill="#d4d4d4" opacity="0.20"/>
<rect x="9.30" y="36.82" width="1.00" height="1" fill="#dcdcaa" opacity="0.56"/>
<rect x="10.30" y="36.82" width="3.00" height="1" fill="#dcdcaa" opacity="0.52"/>
<rect x="13.30" y="36.82" width="1.00" height="1" fill="#dcdcaa" opacity="0.56"/>
<rect x="15.30" y="36.82" width="1.00" height="1" fill="#569cd6" opacity="0.38"/>
<rect x="16.30" y="36.82" width="1.00" height="1" fill="#569cd6" opacity="0.56"/>
<rect x="17.30" y="36.82" width="2.00" height="1" fill="#569cd6" opacity="0.52"/>
<rect x="19.30" y="36.82" width="1.00" height="1" fill="#d4d4d4" opacity="0.20"/>
<rect x="9.30" y="37.81" width="1.00" height="1" fill="#6a9955" opacity="0.20"/>
<rect x="11.30" y="37.81" width="1.00" height="1" fill="#6a9955" opacity="0.56"/>
<rect x="12.30" y="37.81" width="6.00" height="1" fill="#6a9955" opacity="0.36"/>
<rect x="19.30" y="37.81" width="9.00" height="1" fill="#6a9955" opacity="0.36"/>
<rect x="29.30" y="37.81" width="2.00" height="1" fill="#6a9955" opacity="0.36"/>
<rect x="32.30" y="37.81" width="1.00" height="1" fill="#6a9955" opacity="0.56"/>
<rect x="33.30" y="37.81" width="3.00" height="1" fill="#6a9955" opacity="0.36"/>
<rect x="36.30" y="37.81" width="2.00" height="1" fill="#6a9955" opacity="0.56"/>
<rect x="39.30" y="37.81" width="1.00" height="1" fill="#6a9955" opacity="0.36"/>
<rect x="40.30" y="37.81" width="1.00" height="1" fill="#6a9955" opacity="0.56"/>
<rect x="42.30" y="37.81" width="1.00" height="1" fill="#6a9955" opacity="0.56"/>
<rect x="44.30" y="37.81" width="1.00" height="1" fill="#6a9955" opacity="0.56"/>
<rect x="46.30" y="37.81" width="3.00" height="1" fill="#6a9955" opacity="0.36"/>
<rect x="50.30" y="37.81" width="3.00" height="1" fill="#6a9955" opacity="0.56"/>
<rect x="54.30" y="37.81" width="3.00" height="1" fill="#6a9955" opacity="0.56"/>
<rect x="58.30" y="37.81" width="6.00" height="1" fill="#6a9955" opacity="0.56"/>
<rect x="64.30" y="37.81" width="1.00" height="1" fill="#6a9955" opacity="0.20"/>
<rect x="65.30" y="37.81" width="1.00" height="1" fill="#6a9955" opacity="0.56"/>
<rect x="66.30" y="37.81" width="1.00" height="1" fill="#6a9955" opacity="0.38"/>
<rect x="67.30" y="37.81" width="1.00" height="1" fill="#6a9955" opacity="0.56"/>
<rect x="69.30" y="37.81" width="2.00" height="1" fill="#6a9955" opacity="0.56"/>
<rect x="72.30" y="37.81" width="2.00" height="1" fill="#6a9955" opacity="0.36"/>
<rect x="75.30" y="37.81" width="2.00" height="1" fill="#6a9955" opacity="0.56"/>
<rect x="77.30" y="37.81" width="1.00" height="1" fill="#6a9955" opacity="0.38"/>
<rect x="78.30" y="37.81" width="2.00" height="1" fill="#6a9955" opacity="0.56"/>
<rect x="80.30" y="37.81" width="1.00" height="1" fill="#6a9955" opacity="0.38"/>
<rect x="9.30" y="38.81" width="1.00" height="1" fill="#6a9955" opacity="0.20"/>
<rect x="11.30" y="38.81" width="1.00" height="1" fill="#6a9955" opacity="0.56"/>
<rect x="12.30" y="38.81" width="6.00" height="1" fill="#6a9955" opacity="0.52"/>
<rect x="19.30" y="38.81" width="9.00" height="1" fill="#6a9955" opacity="0.52"/>
<rect x="29.30" y="38.81" width="2.00" height="1" fill="#6a9955" opacity="0.52"/>
<rect x="32.30" y="38.81" width="1.00" height="1" fill="#6a9955" opacity="0.56"/>
<rect x="33.30" y="38.81" width="3.00" height="1" fill="#6a9955" opacity="0.52"/>
<rect x="36.30" y="38.81" width="2.00" height="1" fill="#6a9955" opacity="0.56"/>
<rect x="39.30" y="38.81" width="1.00" height="1" fill="#6a9955" opacity="0.52"/>
<rect x="40.30" y="38.81" width="1.00" height="1" fill="#6a9955" opacity="0.56"/>
<rect x="41.30" y="38.81" width="1.00" height="1" fill="#6a9955" opacity="0.32"/>
<rect x="42.30" y="38.81" width="1.00" height="1" fill="#6a9955" opacity="0.56"/>
<rect x="43.30" y="38.81" width="1.00" height="1" fill="#6a9955" opacity="0.32"/>
<rect x="44.30" y="38.81" width="1.00" height="1" fill="#6a9955" opacity="0.56"/>
<rect x="46.30" y="38.81" width="3.00" height="1" fill="#6a9955" opacity="0.52"/>
<rect x="50.30" y="38.81" width="3.00" height="1" fill="#6a9955" opacity="0.56"/>
<rect x="54.30" y="38.81" width="3.00" height="1" fill="#6a9955" opacity="0.56"/>
<rect x="58.30" y="38.81" width="6.00" height="1" fill="#6a9955" opacity="0.56"/>
<rect x="64.30" y="38.81" width="1.00" height="1" fill="#6a9955" opacity="0.20"/>
<rect x="65.30" y="38.81" width="1.00" height="1" fill="#6a9955" opacity="0.56"/>
<rect x="66.30" y="38.81" width="1.00" height="1" fill="#6a9955" opacity="0.38"/>
<rect x="67.30" y="38.81" width="1.00" height="1" fill="#6a9955" opacity="0.56"/>
<rect x="68.30" y="38.81" width="1.00" height="1" fill="#6a9955" opacity="0.32"/>
<rect x="69.30" y="38.81" width="2.00" height="1" fill="#6a9955" opacity="0.56"/>
<rect x="72.30" y="38.81" width="2.00" height="1" fill="#6a9955" opacity="0.52"/>
<rect x="75.30" y="38.81" width="2.00" height="1" fill="#6a9955" opacity="0.56"/>
<rect x="77.30" y="38.81" width="1.00" height="1" fill="#6a9955" opacity="0.38"/>
<rect x="78.30" y="38.81" width="2.00" height="1" fill="#6a9955" opacity="0.56"/>
<rect x="80.30" y="38.81" width="1.00" height="1" fill="#6a9955" opacity="0.38"/>
<rect x="9.30" y="39.80" width="1.00" height="1" fill="#6a9955" opacity="0.20"/>
<rect x="11.30" y="39.80" width="1.00" height="1" fill="#6a9955" opacity="0.56"/>
<rect x="12.30" y="39.80" width="4.00" height="1" fill="#6a9955" opacity="0.36"/>
<rect x="17.30" y="39.80" width="7.00" height="1" fill="#6a9955" opacity="0.36"/>
<rect x="25.30" y="39.80" width="10.00" height="1" fill="#6a9955" opacity="0.36"/>
<rect x="9.30" y="40.80" width="1.00" height="1" fill="#6a9955" opacity="0.20"/>
<rect x="11.30" y="40.80" width="1.00" height="1" fill="#6a9955" opacity="0.56"/>
<rect x="12.30" y="40.80" width="4.00" height="1" fill="#6a9955" opacity="0.52"/>
<rect x="17.30" y="40.80" width="7.00" height="1" fill="#6a9955" opacity="0.52"/>
<rect x="25.30" y="40.80" width="10.00" height="1" fill="#6a9955" opacity="0.52"/>
<rect x="35.30" y="40.80" width="1.00" height="1" fill="#6a9955" opacity="0.32"/>
<rect x="9.30" y="41.79" width="1.00" height="1" fill="#dcdcaa" opacity="0.56"/>
<rect x="10.30" y="41.79" width="3.00" height="1" fill="#dcdcaa" opacity="0.36"/>
<rect x="13.30" y="41.79" width="1.00" height="1" fill="#dcdcaa" opacity="0.56"/>
<rect x="14.30" y="41.79" width="2.00" height="1" fill="#dcdcaa" opacity="0.36"/>
<rect x="16.30" y="41.79" width="1.00" height="1" fill="#dcdcaa" opacity="0.56"/>
<rect x="18.30" y="41.79" width="2.00" height="1" fill="#d4d4d4" opacity="0.38"/>
<rect x="20.30" y="41.79" width="1.00" height="1" fill="#b5cea8" opacity="0.56"/>
<rect x="22.30" y="41.79" width="6.00" height="1" fill="#b5cea8" opacity="0.56"/>
<rect x="29.30" y="41.79" width="2.00" height="1" fill="#b5cea8" opacity="0.56"/>
<rect x="32.30" y="41.79" width="6.00" height="1" fill="#b5cea8" opacity="0.56"/>
<rect x="39.30" y="41.79" width="2.00" height="1" fill="#b5cea8" opacity="0.56"/>
<rect x="42.30" y="41.79" width="6.00" height="1" fill="#b5cea8" opacity="0.56"/>
<rect x="49.30" y="41.79" width="1.00" height="1" fill="#b5cea8" opacity="0.56"/>
<rect x="51.30" y="41.79" width="6.00" height="1" fill="#b5cea8" opacity="0.56"/>
<rect x="58.30" y="41.79" width="2.00" height="1" fill="#b5cea8" opacity="0.56"/>
<rect x="61.30" y="41.79" width="6.00" height="1" fill="#b5cea8" opacity="0.56"/>
<rect x="68.30" y="41.79" width="2.00" height="1" fill="#b5cea8" opacity="0.56"/>
<rect x="71.30" y="41.79" width="6.00" height="1" fill="#b5cea8" opacity="0.56"/>
<rect x="77.30" y="41.79" width="1.00" height="1" fill="#d4d4d4" opacity="0.38"/>
<rect x="79.30" y="41.79" width="1.00" height="1" fill="#d4d4d4" opacity="0.38"/>
<rect x="80.30" y="41.79" width="1.00" height="1" fill="#b5cea8" opacity="0.56"/>
<rect x="9.30" y="42.79" width="1.00" height="1" fill="#dcdcaa" opacity="0.56"/>
<rect x="10.30" y="42.79" width="3.00" height="1" fill="#dcdcaa" opacity="0.52"/>
<rect x="13.30" y="42.79" width="1.00" height="1" fill="#dcdcaa" opacity="0.56"/>
<rect x="14.30" y="42.79" width="2.00" height="1" fill="#dcdcaa" opacity="0.52"/>
<rect x="16.30" y="42.79" width="1.00" height="1" fill="#dcdcaa" opacity="0.56"/>
<rect x="18.30" y="42.79" width="2.00" height="1" fill="#d4d4d4" opacity="0.38"/>
<rect x="20.30" y="42.79" width="1.00" height="1" fill="#b5cea8" opacity="0.56"/>
<rect x="21.30" y="42.79" width="1.00" height="1" fill="#b5cea8" opacity="0.32"/>
<rect x="22.30" y="42.79" width="6.00" height="1" fill="#b5cea8" opacity="0.56"/>
<rect x="28.30" y="42.79" width="1.00" height="1" fill="#d4d4d4" opacity="0.32"/>
<rect x="29.30" y="42.79" width="2.00" height="1" fill="#b5cea8" opacity="0.56"/>
<rect x="31.30" y="42.79" width="1.00" height="1" fill="#b5cea8" opacity="0.32"/>
<rect x="32.30" y="42.79" width="6.00" height="1" fill="#b5cea8" opacity="0.56"/>
<rect x="38.30" y="42.79" width="1.00" height="1" fill="#d4d4d4" opacity="0.32"/>
<rect x="39.30" y="42.79" width="2.00" height="1" fill="#b5cea8" opacity="0.56"/>
<rect x="41.30" y="42.79" width="1.00" height="1" fill="#b5cea8" opacity="0.32"/>
<rect x="42.30" y="42.79" width="6.00" height="1" fill="#b5cea8" opacity="0.56"/>
<rect x="48.30" y="42.79" width="1.00" height="1" fill="#d4d4d4" opacity="0.32"/>
<rect x="49.30" y="42.79" width="1.00" height="1" fill="#b5cea8" opacity="0.56"/>
<rect x="50.30" y="42.79" width="1.00" height="1" fill="#b5cea8" opacity="0.32"/>
<rect x="51.30" y="42.79" width="6.00" height="1" fill="#b5cea8" opacity="0.56"/>
<rect x="57.30" y="42.79" width="1.00" height="1" fill="#d4d4d4" opacity="0.32"/>
<rect x="58.30" y="42.79" width="2.00" height="1" fill="#b5cea8" opacity="0.56"/>
<rect x="60.30" y="42.79" width="1.00" height="1" fill="#b5cea8" opacity="0.32"/>
<rect x="61.30" y="42.79" width="6.00" height="1" fill="#b5cea8" opacity="0.56"/>
<rect x="67.30" y="42.79" width="1.00" height="1" fill="#d4d4d4" opacity="0.32"/>
<rect x="68.30" y="42.79" width="2.00" height="1" fill="#b5cea8" opacity="0.56"/>
<rect x="70.30" y="42.79" width="1.00" height="1" fill="#b5cea8" opacity="0.32"/>
<rect x="71.30" y="42.79" width="6.00" height="1" fill="#b5cea8" opacity="0.56"/>
<rect x="77.30" y="42.79" width="1.00" height="1" fill="#d4d4d4" opacity="0.38"/>
<rect x="78.30" y="42.79" width="1.00" height="1" fill="#d4d4d4" opacity="0.32"/>
<rect x="79.30" y="42.79" width="1.00" height="1" fill="#d4d4d4" opacity="0.38"/>
<rect x="80.30" y="42.79" width="1.00" height="1" fill="#b5cea8" opacity="0.56"/>
<rect x="9.30" y="43.78" width="1.00" height="1" fill="#dcdcaa" opacity="0.56"/>
<rect x="10.30" y="43.78" width="3.00" height="1" fill="#dcdcaa" opacity="0.36"/>
<rect x="13.30" y="43.78" width="1.00" height="1" fill="#dcdcaa" opacity="0.56"/>
<rect x="15.30" y="43.78" width="2.00" height="1" fill="#d4d4d4" opacity="0.38"/>
<rect x="17.30" y="43.78" width="3.00" height="1" fill="#b5cea8" opacity="0.56"/>
<rect x="21.30" y="43.78" width="3.00" height="1" fill="#b5cea8" opacity="0.56"/>
<rect x="25.30" y="43.78" width="2.00" height="1" fill="#b5cea8" opacity="0.56"/>
<rect x="28.30" y="43.78" width="3.00" height="1" fill="#b5cea8" opacity="0.56"/>
<rect x="32.30" y="43.78" width="3.00" height="1" fill="#b5cea8" opacity="0.56"/>
<rect x="36.30" y="43.78" width="3.00" height="1" fill="#b5cea8" opacity="0.56"/>
<rect x="39.30" y="43.78" width="1.00" height="1" fill="#d4d4d4" opacity="0.38"/>
<rect x="41.30" y="43.78" width="1.00" height="1" fill="#d4d4d4" opacity="0.38"/>
<rect x="42.30" y="43.78" width="1.00" height="1" fill="#b5cea8" opacity="0.56"/>
<rect x="44.30" y="43.78" width="8.00" height="1" fill="#b5cea8" opacity="0.56"/>
<rect x="53.30" y="43.78" width="1.00" height="1" fill="#b5cea8" opacity="0.56"/>
<rect x="55.30" y="43.78" width="8.00" height="1" fill="#b5cea8" opacity="0.56"/>
<rect x="64.30" y="43.78" width="1.00" height="1" fill="#b5cea8" opacity="0.20"/>
<rect x="65.30" y="43.78" width="1.00" height="1" fill="#b5cea8" opacity="0.56"/>
<rect x="67.30" y="43.78" width="8.00" height="1" fill="#b5cea8" opacity="0.56"/>
<rect x="76.30" y="43.78" width="1.00" height="1" fill="#b5cea8" opacity="0.56"/>
<rect x="78.30" y="43.78" width="3.00" height="1" fill="#b5cea8" opacity="0.56"/>
<rect x="9.30" y="44.78" width="1.00" height="1" fill="#dcdcaa" opacity="0.56"/>
<rect x="10.30" y="44.78" width="3.00" height="1" fill="#dcdcaa" opacity="0.52"/>
<rect x="13.30" y="44.78" width="1.00" height="1" fill="#dcdcaa" opacity="0.56"/>
<rect x="15.30" y="44.78" width="2.00" height="1" fill="#d4d4d4" opacity="0.38"/>
<rect x="17.30" y="44.78" width="3.00" height="1" fill="#b5cea8" opacity="0.56"/>
<rect x="20.30" y="44.78" width="1.00" height="1" fill="#b5cea8" opacity="0.32"/>
<rect x="21.30" y="44.78" width="3.00" height="1" fill="#b5cea8" opacity="0.56"/>
<rect x="24.30" y="44.78" width="1.00" height="1" fill="#d4d4d4" opacity="0.32"/>
<rect x="25.30" y="44.78" width="2.00" height="1" fill="#b5cea8" opacity="0.56"/>
<rect x="27.30" y="44.78" width="1.00" height="1" fill="#b5cea8" opacity="0.32"/>
<rect x="28.30" y="44.78" width="3.00" height="1" fill="#b5cea8" opacity="0.56"/>
<rect x="31.30" y="44.78" width="1.00" height="1" fill="#d4d4d4" opacity="0.32"/>
<rect x="32.30" y="44.78" width="3.00" height="1" fill="#b5cea8" opacity="0.56"/>
<rect x="35.30" y="44.78" width="1.00" height="1" fill="#b5cea8" opacity="0.32"/>
<rect x="36.30" y="44.78" width="3.00" height="1" fill="#b5cea8" opacity="0.56"/>
<rect x="39.30" y="44.78" width="1.00" height="1" fill="#d4d4d4" opacity="0.38"/>
<rect x="40.30" y="44.78" width="1.00" height="1" fill="#d4d4d4" opacity="0.32"/>
<rect x="41.30" y="44.78" width="1.00" height="1" fill="#d4d4d4" opacity="0.38"/>
<rect x="42.30" y="44.78" width="1.00" height="1" fill="#b5cea8" opacity="0.56"/>
<rect x="43.30" y="44.78" width="1.00" height="1" fill="#b5cea8" opacity="0.32"/>
<rect x="44.30" y="44.78" width="8.00" height="1" fill="#b5cea8" opacity="0.56"/>
<rect x="52.30" y="44.78" width="1.00" height="1" fill="#d4d4d4" opacity="0.32"/>
<rect x="53.30" y="44.78" width="1.00" height="1" fill="#b5cea8" opacity="0.56"/>
<rect x="54.30" y="44.78" width="1.00" height="1" fill="#b5cea8" opacity="0.32"/>
<rect x="55.30" y="44.78" width="8.00" height="1" fill="#b5cea8" opacity="0.56"/>
<rect x="63.30" y="44.78" width="1.00" height="1" fill="#d4d4d4" opacity="0.32"/>
<rect x="64.30" y="44.78" width="1.00" height="1" fill="#b5cea8" opacity="0.20"/>
<rect x="65.30" y="44.78" width="1.00" height="1" fill="#b5cea8" opacity="0.56"/>
<rect x="66.30" y="44.78" width="1.00" height="1" fill="#b5cea8" opacity="0.32"/>
<rect x="67.30" y="44.78" width="8.00" height="1" fill="#b5cea8" opacity="0.56"/>
<rect x="75.30" y="44.78" width="1.00" height="1" fill="#d4d4d4" opacity="0.32"/>
<rect x="76.30" y="44.78" width="1.00" height="1" fill="#b5cea8" opacity="0.56"/>
<rect x="77.30" y="44.78" width="1.00" height="1" fill="#b5cea8" opacity="0.32"/>
<rect x="78.30" y="44.78" width="3.00" height="1" fill="#b5cea8" opacity="0.56"/>
<rect x="9.30" y="45.77" width="1.00" height="1" fill="#d4d4d4" opacity="0.56"/>
<rect x="10.30" y="45.77" width="4.00" height="1" fill="#d4d4d4" opacity="0.36"/>
<rect x="14.30" y="45.77" width="1.00" height="1" fill="#d4d4d4" opacity="0.56"/>
<rect x="15.30" y="45.77" width="6.00" height="1" fill="#d4d4d4" opacity="0.36"/>
<rect x="21.30" y="45.77" width="1.00" height="1" fill="#d4d4d4" opacity="0.20"/>
<rect x="9.30" y="46.77" width="1.00" height="1" fill="#d4d4d4" opacity="0.56"/>
<rect x="10.30" y="46.77" width="4.00" height="1" fill="#d4d4d4" opacity="0.52"/>
<rect x="14.30" y="46.77" width="1.00" height="1" fill="#d4d4d4" opacity="0.56"/>
<rect x="15.30" y="46.77" width="6.00" height="1" fill="#d4d4d4" opacity="0.52"/>
<rect x="21.30" y="46.77" width="1.00" height="1" fill="#d4d4d4" opacity="0.20"/>
<rect x="9.30" y="47.76" width="1.00" height="1" fill="#dcdcaa" opacity="0.56"/>
<rect x="10.30" y="47.76" width="3.00" height="1" fill="#dcdcaa" opacity="0.36"/>
<rect x="13.30" y="47.76" width="1.00" height="1" fill="#dcdcaa" opacity="0.56"/>
<rect x="14.30" y="47.76" width="2.00" height="1" fill="#dcdcaa" opacity="0.36"/>
<rect x="16.30" y="47.76" width="1.00" height="1" fill="#dcdcaa" opacity="0.56"/>
<rect x="18.30" y="47.76" width="2.00" height="1" fill="#d4d4d4" opacity="0.38"/>
<rect x="20.30" y="47.76" width="1.00" height="1" fill="#b5cea8" opacity="0.56"/>
<rect x="22.30" y="47.76" width="6.00" height="1" fill="#b5cea8" opacity="0.56"/>
<rect x="29.30" y="47.76" width="2.00" height="1" fill="#b5cea8" opacity="0.56"/>
<rect x="32.30" y="47.76" width="6.00" height="1" fill="#b5cea8" opacity="0.56"/>
<rect x="39.30" y="47.76" width="2.00" height="1" fill="#b5cea8" opacity="0.56"/>
<rect x="42.30" y="47.76" width="6.00" height="1" fill="#b5cea8" opacity="0.56"/>
<rect x="49.30" y="47.76" width="1.00" height="1" fill="#b5cea8" opacity="0.56"/>
<rect x="51.30" y="47.76" width="6.00" height="1" fill="#b5cea8" opacity="0.56"/>
<rect x="58.30" y="47.76" width="2.00" height="1" fill="#b5cea8" opacity="0.56"/>
<rect x="61.30" y="47.76" width="6.00" height="1" fill="#b5cea8" opacity="0.56"/>
<rect x="68.30" y="47.76" width="2.00" height="1" fill="#b5cea8" opacity="0.56"/>
<rect x="71.30" y="47.76" width="6.00" height="1" fill="#b5cea8" opacity="0.56"/>
<rect x="77.30" y="47.76" width="1.00" height="1" fill="#d4d4d4" opacity="0.38"/>
<rect x="79.30" y="47.76" width="1.00" height="1" fill="#d4d4d4" opacity="0.38"/>
<rect x="80.30" y="47.76" width="1.00" height="1" fill="#b5cea8" opacity="0.56"/>
<rect x="9.30" y="48.76" width="1.00" height="1" fill="#dcdcaa" opacity="0.56"/>
<rect x="10.30" y="48.76" width="3.00" height="1" fill="#dcdcaa" opacity="0.52"/>
<rect x="13.30" y="48.76" width="1.00" height="1" fill="#dcdcaa" opacity="0.56"/>
<rect x="14.30" y="48.76" width="2.00" height="1" fill="#dcdcaa" opacity="0.52"/>
<rect x="16.30" y="48.76" width="1.00" height="1" fill="#dcdcaa" opacity="0.56"/>
<rect x="18.30" y="48.76" width="2.00" height="1" fill="#d4d4d4" opacity="0.38"/>
<rect x="20.30" y="48.76" width="1.00" height="1" fill="#b5cea8" opacity="0.56"/>
<rect x="21.30" y="48.76" width="1.00" height="1" fill="#b5cea8" opacity="0.32"/>
<rect x="22.30" y="48.76" width="6.00" height="1" fill="#b5cea8" opacity="0.56"/>
<rect x="28.30" y="48.76" width="1.00" height="1" fill="#d4d4d4" opacity="0.32"/>
<rect x="29.30" y="48.76" width="2.00" height="1" fill="#b5cea8" opacity="0.56"/>
<rect x="31.30" y="48.76" width="1.00" height="1" fill="#b5cea8" opacity="0.32"/>
<rect x="32.30" y="48.76" width="6.00" height="1" fill="#b5cea8" opacity="0.56"/>
<rect x="38.30" y="48.76" width="1.00" height="1" fill="#d4d4d4" opacity="0.32"/>
<rect x="39.30" y="48.76" width="2.00" height="1" fill="#b5cea8" opacity="0.56"/>
<rect x="41.30" y="48.76" width="1.00" height="1" fill="#b5cea8" opacity="0.32"/>
<rect x="42.30" y="48.76" width="6.00" height="1" fill="#b5cea8" opacity="0.56"/>
<rect x="48.30" y="48.76" width="1.00" height="1" fill="#d4d4d4" opacity="0.32"/>
<rect x="49.30" y="48.76" width="1.00" height="1" fill="#b5cea8" opacity="0.56"/>
<rect x="50.30" y="48.76" width="1.00" height="1" fill="#b5cea8" opacity="0.32"/>
<rect x="51.30" y="48.76" width="6.00" height="1" fill="#b5cea8" opacity="0.56"/>
<rect x="57.30" y="48.76" width="1.00" height="1" fill="#d4d4d4" opacity="0.32"/>
<rect x="58.30" y="48.76" width="2.00" height="1" fill="#b5cea8" opacity="0.56"/>
<rect x="60.30" y="48.76" width="1.00" height="1" fill="#b5cea8" opacity="0.32"/>
<rect x="61.30" y="48.76" width="6.00" height="1" fill="#b5cea8" opacity="0.56"/>
<rect x="67.30" y="48.76" width="1.00" height="1" fill="#d4d4d4" opacity="0.32"/>
<rect x="68.30" y="48.76" width="2.00" height="1" fill="#b5cea8" opacity="0.56"/>
<rect x="70.30" y="48.76" width="1.00" height="1" fill="#b5cea8" opacity="0.32"/>
<rect x="71.30" y="48.76" width="6.00" height="1" fill="#b5cea8" opacity="0.56"/>
<rect x="77.30" y="48.76" width="1.00" height="1" fill="#d4d4d4" opacity="0.38"/>
<rect x="78.30" y="48.76" width="1.00" height="1" fill="#d4d4d4" opacity="0.32"/>
<rect x="79.30" y="48.76" width="1.00" height="1" fill="#d4d4d4" opacity="0.38"/>
<rect x="80.30" y="48.76" width="1.00" height="1" fill="#b5cea8" opacity="0.56"/>
<rect x="9.30" y="49.75" width="1.00" height="1" fill="#d4d4d4" opacity="0.56"/>
<rect x="10.30" y="49.75" width="3.00" height="1" fill="#d4d4d4" opacity="0.36"/>
<rect x="13.30" y="49.75" width="1.00" height="1" fill="#d4d4d4" opacity="0.56"/>
<rect x="14.30" y="49.75" width="6.00" height="1" fill="#d4d4d4" opacity="0.36"/>
<rect x="20.30" y="49.75" width="1.00" height="1" fill="#d4d4d4" opacity="0.20"/>
<rect x="9.30" y="50.75" width="1.00" height="1" fill="#d4d4d4" opacity="0.56"/>
<rect x="10.30" y="50.75" width="3.00" height="1" fill="#d4d4d4" opacity="0.52"/>
<rect x="13.30" y="50.75" width="1.00" height="1" fill="#d4d4d4" opacity="0.56"/>
<rect x="14.30" y="50.75" width="6.00" height="1" fill="#d4d4d4" opacity="0.52"/>
<rect x="20.30" y="50.75" width="1.00" height="1" fill="#d4d4d4" opacity="0.20"/>
<rect x="5.30" y="51.74" width="7.00" height="1" fill="#c586c0" opacity="0.56"/>
<rect x="5.30" y="52.74" width="7.00" height="1" fill="#c586c0" opacity="0.56"/>
<rect x="1.30" y="55.72" width="9.00" height="1" fill="#c586c0" opacity="0.56"/>
<rect x="1.30" y="56.72" width="9.00" height="1" fill="#c586c0" opacity="0.56"/>
</svg>
  </div>
</div>
</div>
</body>
</html>
